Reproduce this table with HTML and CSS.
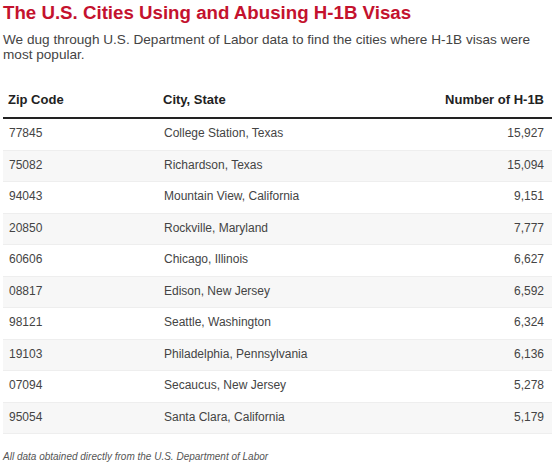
FILE: index.html
```html
<!DOCTYPE html>
<html>
<head>
<meta charset="utf-8">
<link rel="stylesheet" href="styles.css">
</head>
<body>
<div class="page">
  <h1 class="title">The U.S. Cities Using and Abusing H-1B Visas</h1>
  <p class="intro">We dug through U.S. Department of Labor data to find the cities where H-1B visas were most popular.</p>
  <table class="data">
    <thead>
      <tr><th class="zip">Zip Code</th><th class="city">City, State</th><th class="num">Number of H-1B</th></tr>
    </thead>
    <tbody>
      <tr><td class="zip">77845</td><td class="city">College Station, Texas</td><td class="num">15,927</td></tr>
      <tr><td class="zip">75082</td><td class="city">Richardson, Texas</td><td class="num">15,094</td></tr>
      <tr><td class="zip">94043</td><td class="city">Mountain View, California</td><td class="num">9,151</td></tr>
      <tr><td class="zip">20850</td><td class="city">Rockville, Maryland</td><td class="num">7,777</td></tr>
      <tr><td class="zip">60606</td><td class="city">Chicago, Illinois</td><td class="num">6,627</td></tr>
      <tr><td class="zip">08817</td><td class="city">Edison, New Jersey</td><td class="num">6,592</td></tr>
      <tr><td class="zip">98121</td><td class="city">Seattle, Washington</td><td class="num">6,324</td></tr>
      <tr><td class="zip">19103</td><td class="city">Philadelphia, Pennsylvania</td><td class="num">6,136</td></tr>
      <tr><td class="zip">07094</td><td class="city">Secaucus, New Jersey</td><td class="num">5,278</td></tr>
      <tr><td class="zip">95054</td><td class="city">Santa Clara, California</td><td class="num">5,179</td></tr>
    </tbody>
  </table>
  <p class="note">All data obtained directly from the U.S. Department of Labor</p>
</div>
</body>
</html>
```
FILE: styles.css
```css
html, body {
  margin: 0;
  padding: 0;
  background: #fff;
}
.page {
  width: 549px;
  padding: 0 0 0 3px;
  font-family: "Liberation Sans", Arial, sans-serif;
  color: #333;
}
.title {
  margin: 0;
  padding-top: 1px;
  font-size: 18.7px;
  line-height: 24px;
  font-weight: bold;
  color: #c4122e;
}
.intro {
  margin: 7px 0 0 0;
  font-size: 13.6px;
  line-height: 15px;
  color: #444;
}
.data {
  width: 549px;
  margin-top: 30px;
  border-collapse: separate;
  border-spacing: 0;
  font-size: 12px;
}
.data th {
  text-align: left;
  font-weight: bold;
  font-size: 13px;
  color: #222;
  padding: 0 8px 10px 5px;
  border-bottom: 2px solid #222;
  line-height: 15px;
}
.data td {
  padding: 7px 8px 9px 6px;
  border-bottom: 1px solid #eeeeee;
  color: #444;
  line-height: 14.5px;
}
.data tbody tr:nth-child(even) td {
  background: #f7f7f7;
}
.data .zip { width: 141px; }
.data .city { width: 260px; }
.data .num { text-align: right; }
.note {
  margin: 17px 0 0 0;
  font-size: 10px;
  line-height: 12px;
  font-style: italic;
  color: #555;
}
```
